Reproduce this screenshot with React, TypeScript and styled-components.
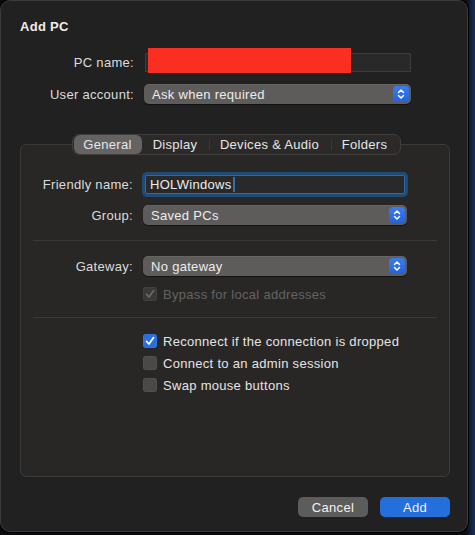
import React from "react";
import styled, { createGlobalStyle } from "styled-components";

const GlobalStyle = createGlobalStyle`
  html, body {
    margin: 0;
    padding: 0;
    background: linear-gradient(90deg, #0c0c0e 0%, #0c0c0e 98%, #16305e 100%);
    font-family: "Liberation Sans", Arial, sans-serif;
    letter-spacing: 0.3px;
    -webkit-font-smoothing: antialiased;
  }
`;

const Page = styled.div`
  width: 475px;
  height: 535px;
  overflow: hidden;
`;

const Window = styled.div`
  box-sizing: border-box;
  width: 468px;
  height: 532px;
  background: #222121;
  border: 1px solid #3c3b3b;
  border-radius: 10px;
  box-shadow: 0 0 0 1px #000;
  padding: 18px 17px 0 19px;
  display: flex;
  flex-direction: column;
`;

const Title = styled.h1`
  margin: 0;
  font-size: 13px;
  line-height: 16px;
  font-weight: 700;
  color: #ececec;
`;

const FormGrid = styled.div<{ $label: number }>`
  display: grid;
  grid-template-columns: ${(p) => p.$label}px auto;
  column-gap: 10px;
  row-gap: 12px;
  align-items: center;
  justify-content: start;
`;

const TopForm = styled(FormGrid)`
  margin-top: 18px;
`;

const Label = styled.label`
  text-align: right;
  font-size: 13px;
  color: #dcdcdc;
  white-space: nowrap;
`;

const TextField = styled.div<{ $focused?: boolean }>`
  position: relative;
  box-sizing: border-box;
  width: ${(p) => (p.$focused ? "260px" : "266px")};
  height: 19px;
  margin-left: ${(p) => (p.$focused ? "2px" : "1px")};
  background: #2a2929;
  border: 1px solid ${(p) => (p.$focused ? "#2b6aa6" : "#3e3d3d")};
  box-shadow: ${(p) => (p.$focused ? "0 0 0 3px #1f4b78" : "none")};
  border-radius: ${(p) => (p.$focused ? "2px" : "0")};
  font-size: 13px;
  color: #ececec;
  line-height: 17px;
  padding-left: 4px;
  display: flex;
  align-items: center;
`;

const Caret = styled.span`
  display: inline-block;
  width: 2px;
  height: 15px;
  background: #2f6fb3;
  margin-left: 1px;
`;

const Redaction = styled.div`
  position: absolute;
  left: 2px;
  top: -6px;
  width: 203px;
  height: 25px;
  background: #fb2f21;
`;

const Popup = styled.div<{ $w: number }>`
  box-sizing: border-box;
  width: ${(p) => p.$w}px;
  height: 20px;
  background: #5d5c5b;
  border-radius: 5px;
  box-shadow: 0 0.5px 1px rgba(0, 0, 0, 0.5), inset 0 0.5px 0 rgba(255, 255, 255, 0.12);
  display: flex;
  align-items: center;
  justify-content: space-between;
  padding: 0 2px 0 8px;
  font-size: 13px;
  color: #ececec;
`;

const Stepper = styled.span`
  width: 16px;
  height: 16px;
  border-radius: 4px;
  background: linear-gradient(#3b7bf0, #2563d6);
  display: flex;
  align-items: center;
  justify-content: center;
`;

const TabBox = styled.div`
  box-sizing: border-box;
  margin-top: 40px;
  width: 430px;
  height: 333px;
  border: 1px solid #3b3a3a;
  border-radius: 6px;
  background: #282726;
  display: flex;
  flex-direction: column;
`;

const Segmented = styled.div`
  align-self: center;
  margin-top: -11px;
  margin-left: 2px;
  height: 21px;
  box-sizing: border-box;
  display: flex;
  align-items: center;
  background: #2b2a29;
  border: 1px solid #3f3e3d;
  border-radius: 7px;
  padding: 0 1px;
`;

const Segment = styled.div<{ $active?: boolean; $w: number; $divider?: boolean }>`
  box-sizing: border-box;
  width: ${(p) => p.$w}px;
  height: 19px;
  border-radius: 6px;
  background: ${(p) => (p.$active ? "#646362" : "transparent")};
  color: #e6e6e6;
  font-size: 13px;
  display: flex;
  align-items: center;
  justify-content: center;
  position: relative;
  &::before {
    content: "";
    display: ${(p) => (p.$divider ? "block" : "none")};
    position: absolute;
    left: 0;
    top: 5px;
    height: 10px;
    width: 1px;
    background: #3a3938;
  }
`;

const BoxBody = styled.div`
  display: flex;
  flex-direction: column;
  margin-top: 20px;
`;

const InnerGrid = styled(FormGrid)`
  row-gap: 11px;
`;

const Separator = styled.div`
  height: 1px;
  background: #3a3938;
  margin: 15px 12px;
`;

const CheckList = styled.div<{ $gap: number; $top?: number }>`
  display: flex;
  flex-direction: column;
  gap: ${(p) => p.$gap}px;
  margin-top: ${(p) => p.$top ?? 0}px;
  padding-left: 122px;
`;

const CheckRow = styled.div<{ $disabled?: boolean }>`
  display: flex;
  align-items: center;
  gap: 6px;
  height: 16px;
  font-size: 13px;
  color: ${(p) => (p.$disabled ? "#646362" : "#e4e4e4")};
`;

const Box = styled.span<{ $checked?: boolean; $disabled?: boolean }>`
  box-sizing: border-box;
  width: 14px;
  height: 14px;
  border-radius: 3px;
  display: flex;
  align-items: center;
  justify-content: center;
  background: ${(p) =>
    p.$disabled ? "#3a3938" : p.$checked ? "#2a6ee0" : "#4a4948"};
  box-shadow: inset 0 0 0 0.5px rgba(255, 255, 255, 0.08);
`;

const Footer = styled.div`
  display: flex;
  justify-content: flex-end;
  gap: 12px;
  margin-top: 20px;
`;

const Button = styled.button<{ $primary?: boolean }>`
  width: 70px;
  height: 20px;
  border: none;
  border-radius: 5px;
  font-family: inherit;
  letter-spacing: inherit;
  font-size: 13px;
  color: #f2f2f2;
  background: ${(p) => (p.$primary ? "#2370dc" : "#5d5c5b")};
  padding: 0;
`;

const Chevrons = () => (
  <svg width="10" height="12" viewBox="0 0 10 12" fill="none">
    <path d="M2.5 4.5 L5 2 L7.5 4.5" stroke="#fff" strokeWidth="1.5" strokeLinecap="round" strokeLinejoin="round" />
    <path d="M2.5 7.5 L5 10 L7.5 7.5" stroke="#fff" strokeWidth="1.5" strokeLinecap="round" strokeLinejoin="round" />
  </svg>
);

const Check = ({ color }: { color: string }) => (
  <svg width="10" height="10" viewBox="0 0 10 10" fill="none">
    <path d="M1.5 5.3 L4 8 L8.6 1.6" stroke={color} strokeWidth="1.7" strokeLinecap="round" strokeLinejoin="round" />
  </svg>
);

const PopupButton: React.FC<{ value: string; width: number }> = ({ value, width }) => (
  <Popup $w={width}>
    <span>{value}</span>
    <Stepper>
      <Chevrons />
    </Stepper>
  </Popup>
);

const App: React.FC = () => {
  return (
    <Page>
      <GlobalStyle />
      <Window>
        <Title>Add PC</Title>
        <TopForm $label={114}>
          <Label>PC name:</Label>
          <TextField>
            <Redaction />
          </TextField>
          <Label>User account:</Label>
          <PopupButton value="Ask when required" width={267} />
        </TopForm>

        <TabBox>
          <Segmented>
            <Segment $active $w={68}>General</Segment>
            <Segment $w={67}>Display</Segment>
            <Segment $w={122} $divider>Devices &amp; Audio</Segment>
            <Segment $w={68} $divider>Folders</Segment>
          </Segmented>

          <BoxBody>
            <InnerGrid $label={112}>
              <Label>Friendly name:</Label>
              <TextField $focused>
                HOLWindows
                <Caret />
              </TextField>
              <Label>Group:</Label>
              <PopupButton value="Saved PCs" width={264} />
            </InnerGrid>

            <Separator />

            <InnerGrid $label={112}>
              <Label>Gateway:</Label>
              <PopupButton value="No gateway" width={264} />
            </InnerGrid>
            <CheckList $gap={6} $top={10}>
              <CheckRow $disabled>
                <Box $checked $disabled>
                  <Check color="#6a6968" />
                </Box>
                Bypass for local addresses
              </CheckRow>
            </CheckList>

            <Separator />

            <CheckList $gap={6}>
              <CheckRow>
                <Box $checked>
                  <Check color="#fff" />
                </Box>
                Reconnect if the connection is dropped
              </CheckRow>
              <CheckRow>
                <Box />
                Connect to an admin session
              </CheckRow>
              <CheckRow>
                <Box />
                Swap mouse buttons
              </CheckRow>
            </CheckList>
          </BoxBody>
        </TabBox>

        <Footer>
          <Button>Cancel</Button>
          <Button $primary>Add</Button>
        </Footer>
      </Window>
    </Page>
  );
};

export default App;
